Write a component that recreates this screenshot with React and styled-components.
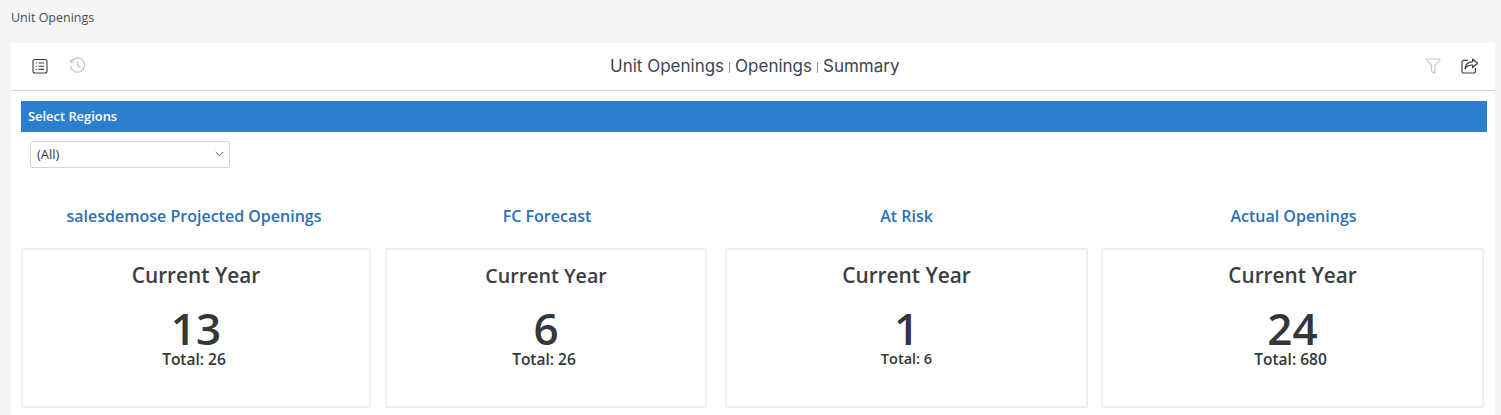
import React from 'react';
import styled, { createGlobalStyle } from 'styled-components';

const GlobalStyle = createGlobalStyle`
  html, body { margin: 0; padding: 0; background: #f5f5f5; overflow: hidden; }
  body { font-family: "Open Sans", sans-serif; color: #33363a; }
`;

const Page = styled.div`
  height: 415px;
  padding: 0 6px 0 11px;
  overflow: hidden;
`;

const PageLabel = styled.div`
  height: 43px;
  padding-top: 9px;
  box-sizing: border-box;
  font-size: 12.5px;
  line-height: 17px;
  color: #4a4d52;
`;

const Panel = styled.div`
  background: #fff;
  height: 372px;
`;

const Toolbar = styled.div`
  height: 45px;
  border-bottom: 1px solid #d2d2d2;
  position: relative;
  display: flex;
  align-items: center;
  justify-content: space-between;
  padding: 0 16px 2px 21px;
`;

const IconGroup = styled.div`
  display: flex;
  align-items: center;
  gap: ${(p) => p.$gap}px;
`;

const Crumbs = styled.div`
  position: absolute;
  left: 599px;
  top: 12px;
  display: flex;
  align-items: center;
  font-family: Inter, sans-serif;
  font-size: 17px;
  line-height: 22px;
  color: #3f4450;
  white-space: nowrap;
`;

const CrumbSep = styled.span`
  width: 1px;
  height: 11px;
  background: #8d9096;
  margin: 2px 5px 0 5px;
`;

const Content = styled.div`
  padding: 10px 8px 0 10px;
`;

const SectionBar = styled.div`
  height: 31px;
  background: #2c7fce;
  color: #fff;
  font-size: 12.9px;
  font-weight: 600;
  line-height: 31px;
  padding-left: 7px;
`;

const Select = styled.div`
  width: 200px;
  height: 27px;
  box-sizing: border-box;
  margin: 9px 0 0 9px;
  border: 1px solid #d5d5d5;
  border-radius: 2px;
  display: flex;
  align-items: center;
  justify-content: space-between;
  padding: 0 5px 1px 6px;
  font-size: 13px;
  color: #33363a;
`;

const Columns = styled.div`
  display: flex;
  margin-top: 35px;
`;

const Column = styled.div`
  width: ${(p) => p.$width}px;
  margin-right: ${(p) => p.$gap}px;
  flex: none;
`;

const Title = styled.div`
  height: 45px;
  text-align: center;
  font-size: 16px;
  font-weight: 600;
  line-height: 26px;
  color: #2b70b5;
  white-space: nowrap;
  transform: translateX(${(p) => p.$shift}px);
`;

const Card = styled.div`
  height: 160px;
  box-sizing: border-box;
  border: 2px solid #eeeeee;
  border-radius: 2px;
  text-align: center;
  padding-top: 12px;
`;

const Period = styled.div`
  font-size: ${(p) => p.$size}px;
  font-weight: 600;
  line-height: 27px;
  color: #3a3d41;
`;

const Value = styled.div`
  font-size: 44px;
  font-weight: 600;
  line-height: 40px;
  margin-top: 19px;
  color: #33363a;
`;

const Total = styled.div`
  font-size: ${(p) => p.$size}px;
  font-weight: 600;
  line-height: 20px;
  margin-top: 1px;
  padding-right: ${(p) => p.$nudge}px;
  color: #33363a;
`;

const ListIcon = () => (
  <svg width="16" height="16" viewBox="0 0 16 16" fill="none" stroke="#3a3f4a" strokeWidth="1.1">
    <rect x="1" y="1.5" width="14" height="13.5" rx="2" />
    <path d="M6.5 5h5.5M6.5 8.2h5.5M6.5 11.4h5.5" />
    <path d="M3.6 5h1.2M3.6 8.2h1.2M3.6 11.4h1.2" />
  </svg>
);

const HistoryIcon = () => (
  <svg width="17" height="17" viewBox="0 0 17 17" fill="none" stroke="#c4c4c4" strokeWidth="1.2">
    <path d="M2.6 4.4A7 7 0 1 1 1.6 9" />
    <path d="M1.6 2.2v2.9h2.9" />
    <path d="M8.6 4.6v4l2.9 2.2" />
  </svg>
);

const FilterIcon = () => (
  <svg width="16" height="16" viewBox="0 0 16 16" fill="none" stroke="#c4c4c4" strokeWidth="1.1">
    <path d="M.8 1h14.4L9.8 7.6v7.6l-3.2-1.6v-6z" strokeLinejoin="round" />
  </svg>
);

const ShareIcon = () => (
  <svg width="18" height="16" viewBox="0 0 18 16" fill="none" stroke="#3a3f4a" strokeWidth="1.2">
    <path d="M7 2.4H2.6A1.6 1.6 0 0 0 1 4v9.4A1.6 1.6 0 0 0 2.6 15h10.2a1.6 1.6 0 0 0 1.6-1.6V10" />
    <path d="M11.6 1l5 4.3-5 4.2V7C8.2 7 5.6 8.2 4 11c.3-4 3-7 7.6-7.4z" strokeLinejoin="round" />
  </svg>
);

const Chevron = () => (
  <svg width="9" height="6" viewBox="0 0 9 6" fill="none" stroke="#55585c" strokeWidth="1">
    <path d="M.7 1l3.8 3.8L8.3 1" />
  </svg>
);

const stats = [
  { title: 'salesdemose Projected Openings', value: 13, total: 26, width: 350, gap: 14, shift: -2, nudge: 4, periodSize: 20.8, totalSize: 15.5 },
  { title: 'FC Forecast', value: 6, total: 26, width: 322, gap: 18, shift: 1, nudge: 4, periodSize: 19.7, totalSize: 15.5 },
  { title: 'At Risk', value: 1, total: 6, width: 363, gap: 13, shift: 0, nudge: 0, periodSize: 20.8, totalSize: 14.5 },
  { title: 'Actual Openings', value: 24, total: 680, width: 383, gap: 0, shift: 1, nudge: 4, periodSize: 20.8, totalSize: 15.5 },
];

export default function App() {
  return (
    <>
      <GlobalStyle />
      <Page>
        <PageLabel>Unit Openings</PageLabel>
        <Panel>
          <Toolbar>
            <IconGroup $gap={21}>
              <ListIcon />
              <HistoryIcon />
            </IconGroup>
            <Crumbs>
              Unit Openings<CrumbSep />Openings<CrumbSep />Summary
            </Crumbs>
            <IconGroup $gap={20}>
              <FilterIcon />
              <ShareIcon />
            </IconGroup>
          </Toolbar>
          <Content>
            <SectionBar>Select Regions</SectionBar>
            <Select>
              (All)
              <Chevron />
            </Select>
            <Columns>
              {stats.map((s) => (
                <Column key={s.title} $width={s.width} $gap={s.gap}>
                  <Title $shift={s.shift}>{s.title}</Title>
                  <Card>
                    <Period $size={s.periodSize}>Current Year</Period>
                    <Value>{s.value}</Value>
                    <Total $nudge={s.nudge} $size={s.totalSize}>Total: {s.total}</Total>
                  </Card>
                </Column>
              ))}
            </Columns>
          </Content>
        </Panel>
      </Page>
    </>
  );
}
